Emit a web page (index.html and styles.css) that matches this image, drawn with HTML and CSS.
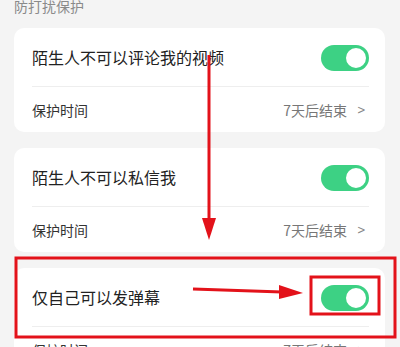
FILE: index.html
```html
<!DOCTYPE html>
<html lang="zh">
<head>
<meta charset="utf-8">
<link rel="stylesheet" href="styles.css">
</head>
<body>
<div class="page">
  <div class="title">防打扰保护</div>
  <div class="card">
    <div class="row main">
      <span class="label">陌生人不可以评论我的视频</span>
      <span class="toggle"><span class="knob"></span></span>
    </div>
    <div class="row sub">
      <span class="sublabel">保护时间</span>
      <span class="value">7天后结束<span class="chev">&gt;</span></span>
    </div>
  </div>
  <div class="card">
    <div class="row main">
      <span class="label">陌生人不可以私信我</span>
      <span class="toggle"><span class="knob"></span></span>
    </div>
    <div class="row sub">
      <span class="sublabel">保护时间</span>
      <span class="value">7天后结束<span class="chev">&gt;</span></span>
    </div>
  </div>
  <div class="card">
    <div class="row main">
      <span class="label">仅自己可以发弹幕</span>
      <span class="toggle"><span class="knob"></span></span>
    </div>
    <div class="row sub">
      <span class="sublabel">保护时间</span>
      <span class="value">7天后结束<span class="chev">&gt;</span></span>
    </div>
  </div>
</div>
<svg class="overlay" width="400" height="347" viewBox="0 0 400 347">
  <g fill="none" stroke="#e3121a" stroke-width="3">
    <rect x="16" y="258" width="379" height="79"/>
    <rect x="311" y="277" width="68" height="37"/>
  </g>
  <line x1="209" y1="55" x2="209" y2="222" stroke="#e3121a" stroke-width="3"/>
  <polygon points="202,218 216,218 209,240" fill="#e3121a"/>
  <line x1="193" y1="289" x2="282" y2="292" stroke="#e3121a" stroke-width="3"/>
  <polygon points="279,285 303,293 279,299" fill="#e3121a"/>
</svg>
</body>
</html>
```
FILE: styles.css
```css
html, body {
  margin: 0;
  padding: 0;
}
body {
  width: 400px;
  height: 347px;
  overflow: hidden;
  background: #f4f4f4;
  font-family: "Noto Sans CJK SC", "Noto Sans", sans-serif;
  position: relative;
}
.page {
  padding: 0 15px 0 14px;
  display: flex;
  flex-direction: column;
  gap: 16px;
}
.title {
  margin-top: -2px;
  margin-bottom: -2px;
  height: 16px;
  line-height: 16px;
  font-size: 14px;
  color: #8a8a8a;
}
.card {
  background: #fff;
  border-radius: 10px;
  padding: 0 16px 0 18px;
}
.row {
  display: flex;
  align-items: center;
  justify-content: space-between;
}
.row.main {
  height: 58px;
  border-bottom: 1px solid #eeeeee;
}
.row.sub {
  height: 45px;
}
.label {
  font-size: 16px;
  color: #222;
}
.sublabel {
  font-size: 14px;
  color: #333;
}
.value {
  font-size: 14px;
  color: #777;
  display: flex;
  align-items: center;
  margin-right: 2px;
}
.chev {
  margin-left: 9px;
  color: #888;
  font-family: "DejaVu Sans", sans-serif;
  font-size: 13px;
  transform: scaleX(0.8);
}
.toggle {
  width: 48px;
  height: 26px;
  border-radius: 13px;
  background: #3dd184;
  display: flex;
  align-items: center;
  justify-content: flex-end;
  padding: 0 1px;
  box-sizing: border-box;
  margin-top: 2px;
}
.knob {
  width: 24px;
  height: 24px;
  border-radius: 50%;
  background: #fff;
  box-sizing: border-box;
  border: 2px solid #3dd184;
}
.overlay {
  position: absolute;
  left: 0;
  top: 0;
}
```
